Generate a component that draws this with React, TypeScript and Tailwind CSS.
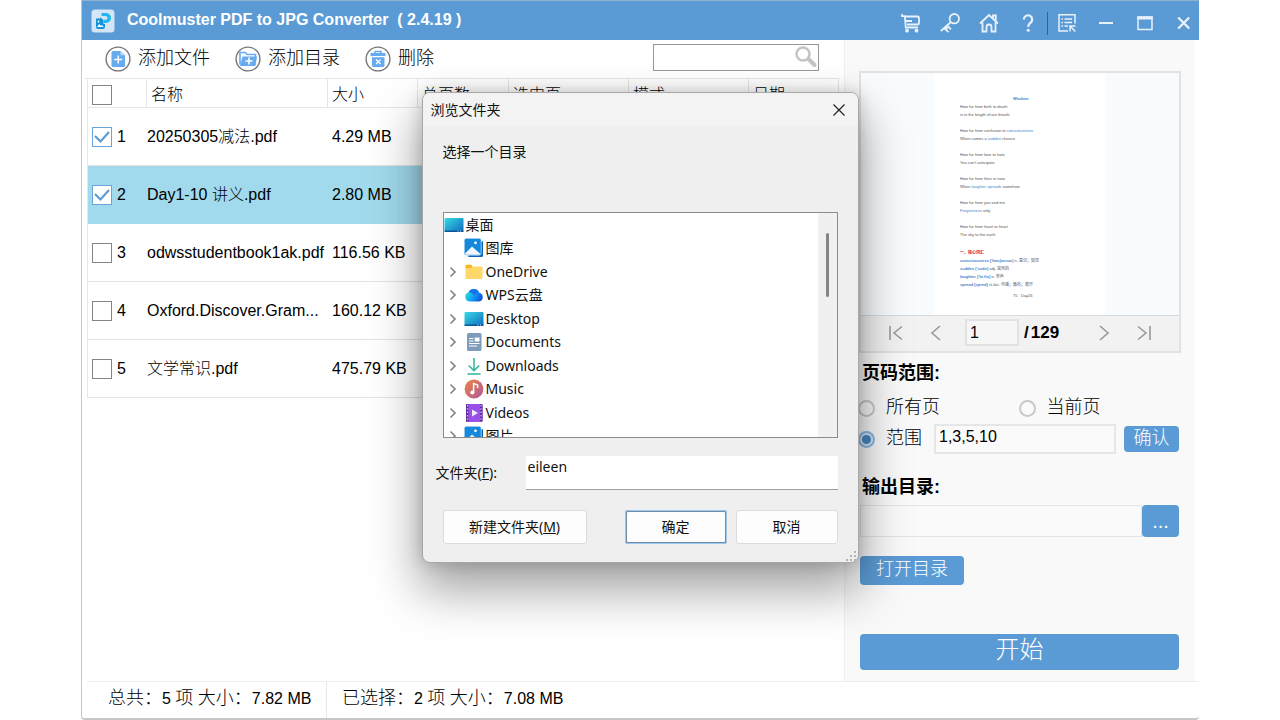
import React from "react";

const ui = "font-['Liberation_Sans','Noto_Sans_CJK_SC',sans-serif]";
const dlg = "font-['Noto_Sans','Noto_Sans_CJK_SC',sans-serif]";

const files = [
  { id: 1, name: "20250305减法.pdf", size: "4.29 MB", checked: true, active: false },
  { id: 2, name: "Day1-10 讲义.pdf", size: "2.80 MB", checked: true, active: true },
  { id: 3, name: "odwsstudentbook1ak.pdf", size: "116.56 KB", checked: false, active: false },
  { id: 4, name: "Oxford.Discover.Gram...", size: "160.12 KB", checked: false, active: false },
  { id: 5, name: "文学常识.pdf", size: "475.79 KB", checked: false, active: false },
];

function Tick({ label, checked }: { label: string; checked?: boolean }) {
  return (
    <span className="grid size-5 shrink-0">
      <input
        type="checkbox"
        aria-label={label}
        defaultChecked={checked}
        className="peer col-start-1 row-start-1 size-5 appearance-none border border-[#858585] bg-white checked:border-[#6ba3dc]"
      />
      <svg viewBox="0 0 20 20" className="pointer-events-none invisible col-start-1 row-start-1 size-5 peer-checked:visible" fill="none" stroke="#5b9bd5" strokeWidth="2.2">
        <path d="M3 9 8.5 14.5 17 5" />
      </svg>
    </span>
  );
}

function Radio({ label, checked }: { label: string; checked?: boolean }) {
  return (
    <label className="flex items-center gap-[11px] text-lg">
      <span className="grid size-[17px] place-items-center">
        <input
          type="radio"
          name="range"
          defaultChecked={checked}
          className="peer col-start-1 row-start-1 size-[17px] appearance-none rounded-full border-2 border-[#c8c8c8] bg-[#fafafa] checked:border-[#8ab8e4] checked:bg-[#d6e6f5]"
        />
        <span className="pointer-events-none invisible col-start-1 row-start-1 size-[9px] rounded-full bg-[#4788c5] peer-checked:visible" />
      </span>
      <span className="pb-[2px]">{label}</span>
    </label>
  );
}

function Logo() {
  return (
    <svg viewBox="0 0 24 24" className="size-6" aria-hidden="true">
      <rect x="0.5" y="0.5" width="23" height="23" rx="3.5" fill="#d3e5f6" />
      <path d="M10.5 4h4.500a5 5 0 0 1 0 10h-2v-3.200h1.600a1.900 1.900 0 0 0 0-3.800H10.500z" fill="#1fb9f0" />
      <path d="M5 9.500h4V8.300l3.500 2.700V15H14v3a2 2 0 0 1-2 2H7a2 2 0 0 1-2-2z" fill="#1593d8" />
      <path d="m6 18 2.300-3 1.700 2 1-1 1.600 2z" fill="#fff" />
      <circle cx="7.500" cy="12.500" r="0.900" fill="#fff" />
    </svg>
  );
}

function AddFileIcon() {
  return (
    <svg viewBox="0 0 26 26" className="size-[26px]" aria-hidden="true">
      <circle cx="13" cy="13" r="11.900" fill="#fff" stroke="#777" strokeWidth="1.400" />
      <path d="M8 5h7.500L20 9.300V19.500a1.500 1.500 0 0 1-1.500 1.500H8a1.500 1.500 0 0 1-1.500-1.500V6.500A1.500 1.500 0 0 1 8 5z" fill="#66aaf0" />
      <path d="M15.500 5v4.300H20" fill="#b9d9fa" />
      <path d="M13.200 9.500v8M9.200 13.500h8" stroke="#fff" strokeWidth="1.400" />
    </svg>
  );
}

function AddFolderIcon() {
  return (
    <svg viewBox="0 0 26 26" className="size-[26px]" aria-hidden="true">
      <circle cx="13" cy="13" r="11.900" fill="#fff" stroke="#777" strokeWidth="1.400" />
      <path d="M5 18.500V6.500h5.500l1.500 2h8.500v2.500" fill="none" stroke="#66aaf0" strokeWidth="1.600" />
      <path d="M7.500 10.500h14.500l-1.500 9.500H5z" fill="#66aaf0" />
      <path d="M14 11.500v7M10.500 15h7" stroke="#fff" strokeWidth="1.600" />
    </svg>
  );
}

function TrashIcon() {
  return (
    <svg viewBox="0 0 26 26" className="size-[26px]" aria-hidden="true">
      <circle cx="13" cy="13" r="11.900" fill="#fff" stroke="#777" strokeWidth="1.400" />
      <path d="M10 7V5.500h6V7" fill="none" stroke="#66aaf0" strokeWidth="1.500" />
      <path d="M5.500 7h15v3h-15zM7 11.200h12.500V19.500a1.500 1.500 0 0 1-1.500 1.500H8.500A1.500 1.500 0 0 1 7 19.500z" fill="#66aaf0" />
      <path d="m11 13.500 4.500 4.500m0-4.500L11 18" stroke="#fff" strokeWidth="1.300" />
    </svg>
  );
}

function WinIcon({ label, children, width = 2 }: { label: string; children: React.ReactNode; width?: number }) {
  return (
    <button type="button" aria-label={label} className="text-[#e8f1fa]">
      <svg viewBox="0 0 20 20" className="size-5" fill="none" stroke="currentColor" strokeWidth={width}>
        {children}
      </svg>
    </button>
  );
}

function TitleBar() {
  return (
    <header className="flex h-10 items-center border-t border-[#8fb0cc] bg-[#5b9bd5] pl-[9px] pr-[5px]">
      <Logo />
      <h1 className="ml-3 flex-1 whitespace-pre pb-px text-base font-bold text-white">Coolmuster PDF to JPG Converter  ( 2.4.19 )</h1>
      <div className="flex items-center gap-[19px] pt-[5px]">
        <WinIcon label="购买" width={1.8}>
          <path d="M1 1v2.200h2.800l1 11.300H17M4 3.500h12.300A1.700 1.700 0 0 1 18 5.200v4.600a1.700 1.700 0 0 1-1.700 1.700H6M4 8h7" />
          <circle cx="6" cy="17.700" r="1.900" fill="currentColor" stroke="none" />
          <circle cx="15.500" cy="17.700" r="1.900" fill="currentColor" stroke="none" />
        </WinIcon>
        <WinIcon label="注册" width={1.8}>
          <circle cx="14.300" cy="5.700" r="4.700" />
          <path d="M11 9 .800 18M7 12.500l4 3.800M4 15l4.500 4.200M5.500 13.800l2 2" />
        </WinIcon>
        <WinIcon label="主页" width={1.8}>
          <path d="M1 10.500 10 2l9 8.500M14 5.500V2.500h2.800v5.500M3.500 9.500v9h4V14a2.500 2.500 0 0 1 5 0v4.500h4v-9" />
        </WinIcon>
        <WinIcon label="帮助" width={2.2}>
          <path d="M5.800 6.500a4.200 4.200 0 1 1 6.500 3.500c-1.500 1-2.100 1.700-2.100 4" />
          <circle cx="10.200" cy="17.300" r="1.500" fill="currentColor" stroke="none" />
        </WinIcon>
        <span className="-mx-[10px] h-[23px] w-px bg-[#4c5d6d]" />
        <WinIcon label="菜单" width={1.5}>
          <path d="M18 10.500V1.700H2V18h9M4.500 6H6M7.500 6H15M4.500 9.500H6M7.500 9.500H15M4.500 13H6M7.500 13h3.500M13 18.500V13h5.500M13.300 13.300l5 5.200" />
        </WinIcon>
        <WinIcon label="最小化" width={2}>
          <path d="M3 10h14" />
        </WinIcon>
        <WinIcon label="最大化" width={1.5}>
          <path d="M3 4h14v12.500H3z" />
          <path d="M2.300 5h15.400" strokeWidth="3" />
        </WinIcon>
        <WinIcon label="关闭" width={2.4}>
          <path d="m4.200 4.500 11 11m0-11-11 11" />
        </WinIcon>
      </div>
    </header>
  );
}

function FilePanel() {
  const th = "border-r border-[#e6e6e6] pl-1 pt-1 text-left font-light";
  return (
    <main className="min-w-0 flex-1 pl-[5px] pr-[5px]">
      <div className="-ml-[3px] flex h-[39px] items-center border-b border-[#e6e6e6] pl-[21px] text-lg font-light leading-[22px]">
        <button type="button" className="flex items-center gap-[7px]">
          <AddFileIcon />
          <span className="pb-[3px]">添加文件</span>
        </button>
        <button type="button" className="ml-[25px] flex items-center gap-[7px]">
          <AddFolderIcon />
          <span className="pb-[3px]">添加目录</span>
        </button>
        <button type="button" className="ml-[25px] flex items-center gap-[7px]">
          <TrashIcon />
          <span className="pb-[3px]">删除</span>
        </button>
        <div className="mb-1 ml-auto mr-5 flex h-[27px] w-[166px] items-center border border-[#989898] bg-white">
          <input aria-label="搜索" className="min-w-0 flex-1 px-1 text-base outline-none" />
          <svg viewBox="0 0 24 24" className="size-6" fill="none" stroke="#c4c4c4" aria-hidden="true">
            <circle cx="9" cy="9" r="6.500" strokeWidth="2.500" />
            <path d="m14.500 14 6 6" strokeWidth="4" strokeLinecap="round" />
          </svg>
        </div>
      </div>
      <table className="w-full table-fixed border-separate border-spacing-0 border-l border-[#e6e6e6] text-base font-light">
        <colgroup>
          <col className="w-[59px]" />
          <col />
          <col className="w-[90px]" />
          <col className="w-[91px]" />
          <col className="w-[120px]" />
          <col className="w-[120px]" />
          <col className="w-[90px]" />
        </colgroup>
        <thead>
          <tr className="h-7 *:border-b">
            <th className="border-r border-[#e6e6e6] pl-1 pt-[3px]">
              <Tick label="全选" />
            </th>
            <th className={th}>名称</th>
            <th className={th}>大小</th>
            <th className={th}>总页数</th>
            <th className={th}>选中页</th>
            <th className={th}>模式</th>
            <th className={th}>日期</th>
          </tr>
        </thead>
        <tbody>
          {files.map((f) => (
            <tr key={f.id} className={f.active ? "h-[58px] bg-[#a1daec] *:border-b *:border-[#a1daec]" : "h-[58px] *:border-b *:border-[#e2e2e2]"}>
              <td className="pl-1">
                <div className="flex items-center gap-[5px]">
                  <Tick label={f.name} checked={f.checked} />
                  {f.id}
                </div>
              </td>
              <td className="truncate">{f.name}</td>
              <td className="pl-1">{f.size}</td>
              <td />
              <td />
              <td />
              <td />
            </tr>
          ))}
        </tbody>
      </table>
    </main>
  );
}

const blue = "text-[#3f83cc]";

function PageThumb() {
  return (
    <div className="ml-[73px] h-full w-[171px] bg-white pl-[26px] pt-[22px] text-[4px] leading-[8px] text-[#555] font-['Liberation_Sans_Narrow','Liberation_Sans','Noto_Sans_CJK_SC',sans-serif]">
      <p className={`pl-[53px] font-bold ${blue}`}>Wisdom</p>
      <p>How far from birth to death</p>
      <p>is in the length of our breath</p>
      <p className="mt-2">How far from confusion to <span className={blue}>consciousness</span></p>
      <p>When comes a <span className={blue}>sudden</span> chance</p>
      <p className="mt-2">How far from love to hate</p>
      <p>You can't anticipate</p>
      <p className="mt-2">How far from then or now</p>
      <p>When <span className={blue}>laughter spreads</span> somehow</p>
      <p className="mt-2">How far from you and me</p>
      <p><span className={blue}>Forgiveness</span> only</p>
      <p className="mt-2">How far from heart to heart</p>
      <p>The sky to the earth</p>
      <p className="mt-[10px] font-bold text-[#d22]">一、核心词汇</p>
      <p><b className={blue}>consciousness ['kɒnʃəsnəs]</b> n. 意识；知觉</p>
      <p><b className={blue}>sudden ['sʌdn]</b> adj. 突然的</p>
      <p><b className={blue}>laughter ['lɑːftə]</b> n. 笑声</p>
      <p><b className={blue}>spread [spred]</b> vt.&vi. 传播；散布；展开</p>
      <p className="mt-[3px] pl-[53px]">75 · Day26</p>
    </div>
  );
}

function PagerIcon({ d, label }: { d: string; label: string }) {
  return (
    <button type="button" aria-label={label}>
      <svg viewBox="0 0 16 16" className="size-4" fill="none" stroke="#999" strokeWidth="1.600">
        <path d={d} />
      </svg>
    </button>
  );
}

function SidePanel() {
  return (
    <aside className="mr-[4px] w-[351px] shrink-0 border-l border-[#f0f0f0] bg-[#f9f9f9] pl-[14px] pr-[14px] pt-[31px]">
      <section className="border-2 border-[#e2e2e2] bg-[#f2f2f2]">
        <div className="h-[243px] overflow-hidden border-b border-[#d8dcdf] bg-[#f8fcff]">
          <PageThumb />
        </div>
        <div className="flex h-[35px] items-center pb-[2px] pl-[27px]">
          <PagerIcon label="首页" d="M2 1v14M14 1.500 6 8l8 6.500" />
          <span className="w-6" />
          <PagerIcon label="上一页" d="M12 1 4 8l8 7" />
          <input aria-label="页码" defaultValue="1" className="ml-[21px] h-[27px] w-[54px] border-2 border-[#e2e2e2] bg-[#f6f6f6] px-[3px] text-base" />
          <span className="ml-[5px] flex flex-1 items-center gap-[2px] text-[17px] font-bold">
            <span>/</span>
            <span>129</span>
          </span>
          <PagerIcon label="下一页" d="m4 1 8 7-8 7" />
          <span className="w-6" />
          <PagerIcon label="末页" d="M14 1v14M2 1.500 10 8l-8 6.500" />
          <span className="w-[27px]" />
        </div>
      </section>
      <div className="pl-[1px] pr-[2px]">
        <h2 className="mt-[8px] pl-[2px] text-lg font-bold leading-6">页码范围:</h2>
        <div className="-ml-[2px] mt-[8px] grid grid-cols-2 font-light leading-7">
          <Radio label="所有页" />
          <Radio label="当前页" />
        </div>
        <div className="-ml-[2px] mt-[1px] flex h-[30px] items-center font-light">
          <Radio label="范围" checked />
          <input aria-label="页码范围" defaultValue="1,3,5,10" className="ml-[12px] h-[30px] min-w-0 flex-1 border-2 border-[#e6e6e6] bg-[#fafafa] px-[3px] pb-1 text-base font-normal" />
          <button type="button" className="ml-[8px] h-[26px] w-[55px] rounded bg-[#5b9bd5] pb-[2px] text-lg leading-5 text-white">确认</button>
        </div>
        <h2 className="mt-[21px] pl-[2px] text-lg font-bold leading-6">输出目录:</h2>
        <div className="mt-[6px] flex items-center">
          <input aria-label="输出目录" className="h-8 min-w-0 flex-1 border border-[#e4e4e4] bg-[#fafafa] px-2 text-base" />
          <button type="button" aria-label="浏览" className="h-8 w-[37px] rounded bg-[#5b9bd5] text-xl leading-8 text-white">...</button>
        </div>
        <button type="button" className="mt-[19px] block h-[29px] w-[104px] rounded bg-[#5b9bd5] pb-[3px] text-lg font-light leading-6 text-white">打开目录</button>
        <button type="button" className="mt-[49px] block h-9 w-full rounded bg-[#5b9bd5] pb-1 text-2xl font-light leading-8 text-white">开始</button>
      </div>
    </aside>
  );
}

function ScreenIcon() {
  return (
    <svg viewBox="0 0 20 20" className="size-5" aria-hidden="true">
      <defs>
        <linearGradient id="screen" x1="0" y1="0" x2="1" y2="1">
          <stop stopColor="#38dbe4" />
          <stop offset="1" stopColor="#0e6bc0" />
        </linearGradient>
      </defs>
      <rect x="0.500" y="3" width="19" height="14" rx="1" fill="url(#screen)" />
      <path d="M0.500 15.500h19V16a1 1 0 0 1-1 1h-17a1 1 0 0 1-1-1z" fill="#0a5599" />
      <path d="M13.500 16h1M16 16h1" stroke="#d6f4fb" />
    </svg>
  );
}

function PhotoIcon() {
  return (
    <svg viewBox="0 0 20 20" className="size-5" aria-hidden="true">
      <path d="M18 3a1 1 0 0 1 1 1v13.500a1.500 1.500 0 0 1-1.500 1.500H5a1 1 0 0 1-1-1z" fill="#0b63b8" />
      <rect x="0.200" y="0.200" width="17" height="17" rx="2" fill="#1488dc" stroke="#fff" strokeWidth="0.600" />
      <path d="M1 15.500 8 8.500l8.500 7.500a1.500 1.500 0 0 1-1 .700H2a1.500 1.500 0 0 1-1-1.200z" fill="#eef7ff" />
      <circle cx="11.500" cy="4.800" r="1.400" fill="#fff" />
    </svg>
  );
}

function FolderIcon() {
  return (
    <svg viewBox="0 0 20 20" className="size-5" aria-hidden="true">
      <rect x="1.500" y="4.500" width="17" height="12.500" rx="1" fill="#ffd768" />
      <path d="M1.500 3.800a1 1 0 0 1 1-1h4.800L8.500 4.500 7 6H1.500z" fill="#f8b51e" />
    </svg>
  );
}

function CloudIcon() {
  return (
    <svg viewBox="0 0 20 20" className="size-5" aria-hidden="true">
      <defs>
        <linearGradient id="cloud" x1="0" y1="0.300" x2="1" y2="0.700">
          <stop stopColor="#2ce0d8" />
          <stop offset="0.450" stopColor="#16a6f5" />
          <stop offset="1" stopColor="#0a4fdc" />
        </linearGradient>
      </defs>
      <path d="M5.500 16.500a4.700 4.700 0 0 1-.800-9.200 5.600 5.600 0 0 1 10.400 0.500 4.400 4.400 0 0 1-.200 8.700z" fill="url(#cloud)" />
      <path d="M4.700 7.300a5.600 5.600 0 0 1 10.400 0.500A7 7 0 0 0 10 10.500 6 6 0 0 0 4.700 7.300z" fill="#1672ee" />
    </svg>
  );
}

function DocIcon() {
  return (
    <svg viewBox="0 0 20 20" className="size-5" aria-hidden="true">
      <rect x="3" y="1" width="14.500" height="18" rx="1.500" fill="#7e9bb9" />
      <path d="M5 6.500h4.500M5 9h4.500M5 11.500h10.500M5 14h8" stroke="#fff" strokeWidth="1.200" />
      <rect x="10.800" y="5.500" width="4.700" height="4" fill="#fff" />
    </svg>
  );
}

function DownloadIcon() {
  return (
    <svg viewBox="0 0 20 20" className="size-5" fill="none" stroke="#2bb59b" strokeWidth="1.500" aria-hidden="true">
      <path d="M10 2v12.500M4.800 9.500 10 14.700l5.200-5.200M3.500 18h13" />
    </svg>
  );
}

function MusicIcon() {
  return (
    <svg viewBox="0 0 20 20" className="size-5" aria-hidden="true">
      <defs>
        <linearGradient id="music" x1="0" y1="0" x2="1" y2="1">
          <stop stopColor="#f0853f" />
          <stop offset="1" stopColor="#b0579f" />
        </linearGradient>
      </defs>
      <circle cx="10" cy="10" r="9.400" fill="url(#music)" />
      <circle cx="8.300" cy="13.500" r="2" fill="#fff" />
      <path d="M9.600 13.500V4.500l4 1.500v3" fill="none" stroke="#fff" strokeWidth="1.500" />
    </svg>
  );
}

function VideoIcon() {
  return (
    <svg viewBox="0 0 20 20" className="size-5" aria-hidden="true">
      <rect x="2" y="1" width="16.500" height="18" rx="1.200" fill="#9b51e8" />
      <path d="M2 2a1 1 0 0 1 1-1h1.500v18H3a1 1 0 0 1-1-1zM16 1h1.500a1 1 0 0 1 1 1v16a1 1 0 0 1-1 1H16z" fill="#5e2a9e" />
      <path d="M3.500 2v17M17 2v17" stroke="#d7b6fa" strokeWidth="1.300" strokeDasharray="1.500 1.800" />
      <path d="M8 6.500v7l6-3.500z" fill="#f0eafa" />
    </svg>
  );
}

const folders: { name: string; icon: React.ReactNode; arrow: boolean }[] = [
  { name: "图库", icon: <PhotoIcon />, arrow: false },
  { name: "OneDrive", icon: <FolderIcon />, arrow: true },
  { name: "WPS云盘", icon: <CloudIcon />, arrow: true },
  { name: "Desktop", icon: <ScreenIcon />, arrow: true },
  { name: "Documents", icon: <DocIcon />, arrow: true },
  { name: "Downloads", icon: <DownloadIcon />, arrow: true },
  { name: "Music", icon: <MusicIcon />, arrow: true },
  { name: "Videos", icon: <VideoIcon />, arrow: true },
  { name: "图片", icon: <PhotoIcon />, arrow: true },
];

function FolderDialog() {
  const btn = "h-[34px] rounded-[3px] border border-[#dcdcdc] bg-[#fdfdfd]";
  return (
    <div
      role="dialog"
      aria-label="浏览文件夹"
      className={`absolute inset-x-0 top-[92px] mx-auto w-[437px] overflow-hidden rounded-lg border border-[#a8a8a8] bg-[#efefef] text-sm text-[#111] shadow-[0_24px_48px_4px_rgba(0,0,0,0.36),0_0_16px_rgba(0,0,0,0.18)] ${dlg}`}
    >
      <div className="flex h-[33px] items-center justify-between bg-[#f3f3f3] pl-2 pr-[13px]">
        <h2>浏览文件夹</h2>
        <button type="button" aria-label="关闭">
          <svg viewBox="0 0 12 12" className="size-3" fill="none" stroke="#222" strokeWidth="1.200">
            <path d="m0.500 0.500 11 11m0-11-11 11" />
          </svg>
        </button>
      </div>
      <div className="px-5 pb-[18px] pt-4">
        <p className="leading-5">选择一个目录</p>
        <div className="mt-[50px] flex h-[226px] overflow-hidden border border-[#8c8c8c] bg-white">
          <ul className="flex h-[235px] flex-1 flex-col leading-5">
            <li className="flex flex-1 items-center gap-[2px]">
              <ScreenIcon />
              桌面
            </li>
            {folders.map((f) => (
              <li key={f.name} className="flex flex-1 items-center gap-[2px]">
                <svg viewBox="0 0 18 18" className="size-[18px]" fill="none" stroke="#858585" strokeWidth="1.700" aria-hidden="true">
                  {f.arrow && <path d="m6.500 4.500 4.500 4.500-4.500 4.500" />}
                </svg>
                {f.icon}
                {f.name}
              </li>
            ))}
          </ul>
          <div className="w-[19px] bg-[#f0f0f0] pt-5">
            <div className="mx-auto h-16 w-[3px] rounded bg-[#858585]" />
          </div>
        </div>
        <div className="mt-[18px] flex items-center">
          <label htmlFor="folder" className="-ml-[7px] w-[90px]">
            文件夹(<u>F</u>):
          </label>
          <input id="folder" defaultValue="eileen" className="h-[34px] min-w-0 flex-1 border-b border-[#a0a0a0] bg-white pb-3 pl-[2px]" />
        </div>
        <div className="mt-[20px] flex">
          <button type="button" className={`${btn} w-[144px]`}>
            新建文件夹(<u>M</u>)
          </button>
          <button type="button" className="ml-auto h-[34px] w-[102px] rounded-[3px] border-2 border-[#6f8ca8] bg-[#fdfdfd] outline outline-1 -outline-offset-1 outline-[#9cc8ee]">确定</button>
          <button type="button" className={`${btn} ml-[9px] w-[102px]`}>取消</button>
        </div>
      </div>
      <svg viewBox="0 0 10 10" className="absolute bottom-[1px] right-[2px] size-[10px]" fill="#b4b4b4" aria-hidden="true">
        <path d="M8 0h2v2H8zM4 4h2v2H4zM8 4h2v2H8zM0 8h2v2H0zM4 8h2v2H4zM8 8h2v2H8z" />
      </svg>
    </div>
  );
}

export default function App() {
  return (
    <div className={`relative flex min-h-screen flex-col overflow-hidden bg-white pl-[81px] pr-[81px] text-black ${ui}`}>
      <div className="flex flex-1 flex-col rounded-b border-b-2 border-l border-[#c6c6c6]">
        <TitleBar />
        <div className="flex flex-1">
          <FilePanel />
          <SidePanel />
        </div>
        <footer className="ml-[5px] flex h-[37px] items-stretch border-t border-[#eeeeee] text-lg font-light">
          <p className="flex w-[240px] items-center border-r border-[#e6e6e6] pb-1 pl-[21px]">
            <span>总共：<span className="text-base">5 </span>项<span className="text-base"> </span>大小：<span className="text-base">7.82 MB</span></span>
          </p>
          <p className="flex items-center pb-1 pl-[15px]">
            <span>已选择：<span className="text-base">2 </span>项<span className="text-base"> </span>大小：<span className="text-base">7.08 MB</span></span>
          </p>
        </footer>
      </div>
      <FolderDialog />
    </div>
  );
}
